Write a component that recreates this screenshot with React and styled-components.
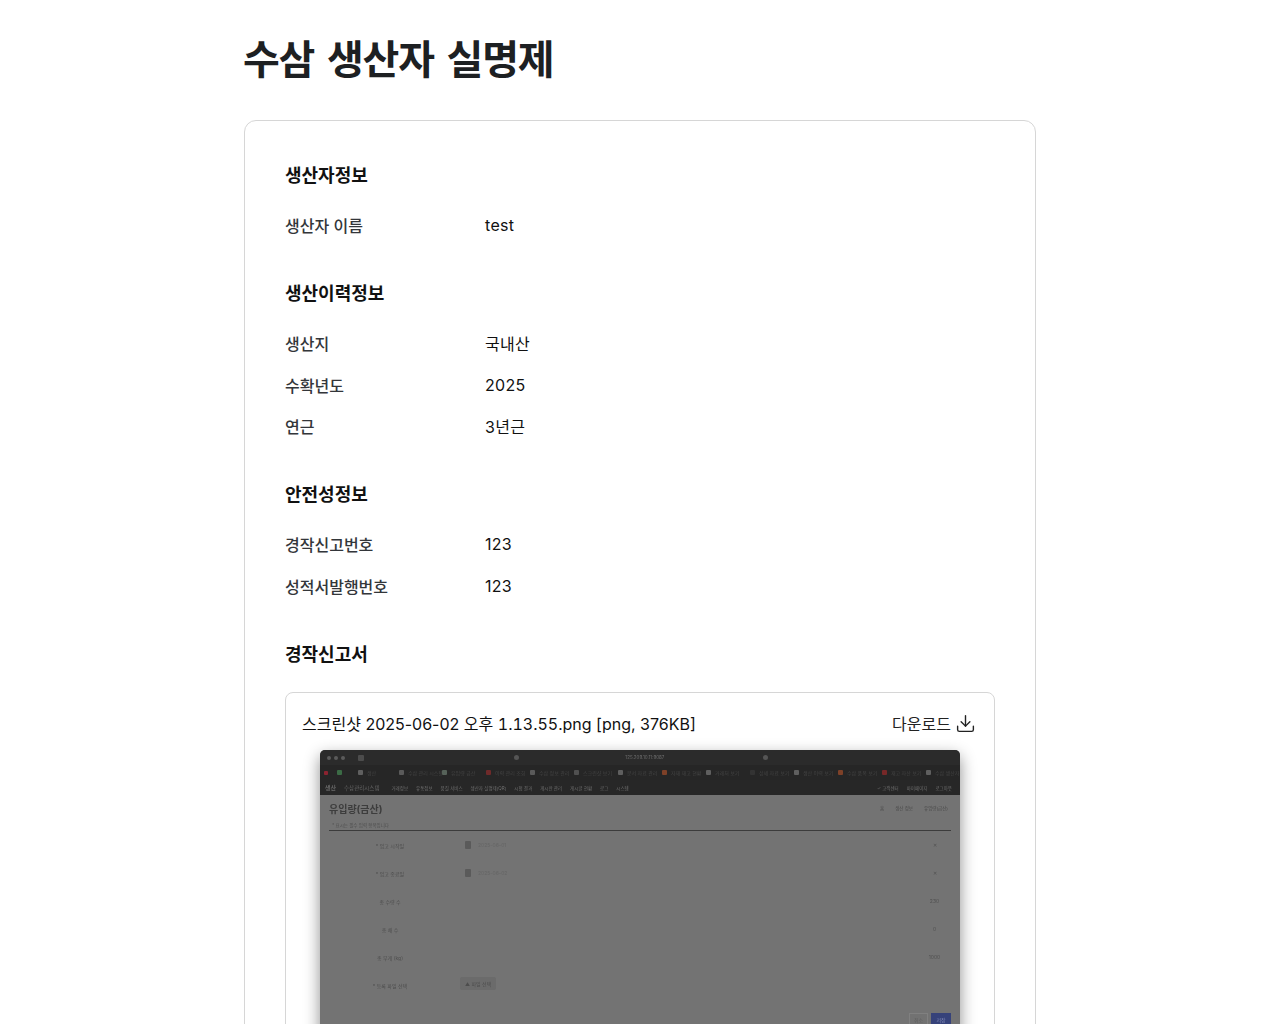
import React from 'react';
import styled, { createGlobalStyle } from 'styled-components';
import { Download } from 'lucide-react';

const GlobalStyle = createGlobalStyle`
  body {
    margin: 0;
    background: #fff;
    color: #111;
    font-family: Inter, "Noto Sans CJK KR", sans-serif;
  }
`;

const Page = styled.main`
  width: 792px;
  margin: 0 auto;
  padding: 32px 0 60px;
`;

const Title = styled.h1`
  margin: 0 0 32px -1px;
  font-size: 40px;
  line-height: 56px;
  font-weight: 700;
  letter-spacing: -1.2px;
  word-spacing: 4.5px;
  color: #1d2022;
`;

const Card = styled.section`
  border: 1px solid #d6d6d6;
  border-radius: 12px;
  padding: 41px 40px 40px;
`;

const Section = styled.div`
  margin-bottom: 34px;
  &:last-child { margin-bottom: 0; }
`;

const SectionTitle = styled.h2`
  margin: 0 0 15.5px;
  font-size: 18px;
  line-height: 27px;
  font-weight: 700;
  color: #111;
`;

const Row = styled.div`
  display: grid;
  grid-template-columns: 200px 1fr;
  align-items: center;
  height: 41.5px;
  font-size: 16px;
`;

const Label = styled.span`
  color: #33363a;
  font-weight: 500;
`;

const Value = styled.span`
  color: #111;
  letter-spacing: 0.3px;
`;

const FileBox = styled.div`
  border: 1px solid #d6d6d6;
  border-radius: 8px;
  margin-top: 24.5px;
  padding: 15px 16px 24px;
  overflow: hidden;
`;

const FileHeader = styled.div`
  display: flex;
  justify-content: space-between;
  align-items: center;
  height: 30px;
  font-size: 16px;
  padding-right: 2px;
  margin-bottom: 12px;
`;

const FileStamp = styled.span`
  font-feature-settings: "tnum";
`;

const DownloadLink = styled.a`
  display: flex;
  align-items: center;
  gap: 4px;
  color: #222;
`;

const ShotFrame = styled.div`
  display: flex;
  justify-content: center;
`;

const ShotWindow = styled.div`
  width: 640px;
  height: 300px;
  background: #737373;
  border-radius: 5px 5px 0 0;
  box-shadow: 0 6px 16px rgba(0, 0, 0, 0.45);
  display: flex;
  flex-direction: column;
  overflow: hidden;
  font-size: 5px;
  color: #595959;
`;

const ShotBar = styled.div`
  display: flex;
  align-items: center;
  height: ${(p) => p.$h}px;
  flex-shrink: 0;
  background: ${(p) => p.$bg};
  padding: 0 8px 0 ${(p) => p.$left || 7}px;
  gap: ${(p) => p.$gap || 0}px;
  color: #666;
  filter: blur(0.4px);
`;

const Dot = styled.i`
  width: ${(p) => p.$s || 4}px;
  height: ${(p) => p.$s || 4}px;
  flex-shrink: 0;
  margin-left: ${(p) => p.$ml || 0}px;
  margin-right: ${(p) => p.$mr || 0}px;
  border-radius: ${(p) => (p.$square ? '1px' : '50%')};
  background: ${(p) => p.$c};
`;

const Tab = styled.span`
  display: flex;
  align-items: center;
  gap: 4px;
  width: ${(p) => p.$w || 44}px;
  flex-shrink: 0;
  white-space: nowrap;
  overflow: hidden;
  color: #444;
`;

const Spacer = styled.span`
  flex: ${(p) => p.$f || 1};
`;

const BrandLogo = styled.span`
  font-size: 6px;
  font-weight: 700;
  color: #666;
  white-space: nowrap;
`;

const BrandText = styled.span`
  font-size: 5.5px;
  color: #626262;
  margin-right: 4px;
  white-space: nowrap;
`;

const NavItem = styled.span`
  white-space: nowrap;
  color: #6e6e6e;
  font-size: 4.5px;
`;

const ShotBody = styled.div`
  flex: 1;
  display: flex;
  flex-direction: column;
  padding: 0 9px 0 9px;
  filter: blur(0.45px);
`;

const ShotHead = styled.div`
  display: flex;
  align-items: center;
  justify-content: space-between;
  height: 26px;
  padding-right: 3px;
`;

const ShotTitle = styled.span`
  font-size: 10px;
  font-weight: 700;
  color: #3d3d3d;
`;

const ShotCrumbs = styled.div`
  display: flex;
  gap: 11px;
  align-items: center;
  color: #4a4a4a;
  font-size: 4.5px;
`;

const ShotSub = styled.div`
  height: 9px;
  font-size: 4.5px;
  line-height: 9px;
  padding-left: 3px;
  color: #4f4f4f;
  border-bottom: 1px solid #3c3c3c;
  box-sizing: content-box;
`;

const FormRow = styled.div`
  display: grid;
  grid-template-columns: 122px 20px 1fr 33px;
  align-items: center;
  height: 28px;
  color: #4d4d4d;
  &:first-of-type { margin-top: 1px; }
`;

const FormLabel = styled.span`
  text-align: center;
`;

const FormValue = styled.span`
  padding-left: 7px;
  color: #656565;
`;

const FormEnd = styled.span`
  text-align: center;
  color: #505050;
`;

const DocIcon = styled.i`
  width: 6px;
  height: 8px;
  justify-self: end;
  background: #5a5a5a;
  border-radius: 1px;
`;

const UploadChip = styled.span`
  display: inline-flex;
  align-items: center;
  gap: 3px;
  justify-self: start;
  margin-left: -11px;
  margin-top: -4px;
  padding: 3px 5px;
  border-radius: 2px;
  background: #6b6b6b;
  white-space: nowrap;
`;

const ShotActions = styled.div`
  display: flex;
  justify-content: flex-end;
  gap: 3px;
  margin-top: 14px;
`;

const ShotButton = styled.span`
  width: ${(p) => p.$w}px;
  height: 11px;
  display: flex;
  align-items: center;
  justify-content: center;
  color: ${(p) => (p.$primary ? '#7f88b4' : '#5e5e5e')};
  background: ${(p) => (p.$primary ? '#36427a' : '#727272')};
  border: 1px solid ${(p) => (p.$primary ? '#36427a' : '#808080')};
`;

const tabs = [
  ['#5f5f5f', '생산', 41], ['#5a5a5a', '수삼 관리 시스템', 43], ['#566259', '유입량 금산'], ['#6f2a2a', '이력 관리 조회'],
  ['#5a5a5a', '수삼 정보 관리'], ['#505050', '스크린샷 보기'], ['#5f5f5f', '문서 자료 관리'], ['#7e4128', '자재 재고 현황'],
  ['#5f5f5f', '거래처 보기'], ['#333', '상세 자료 보기'], ['#5f5f5f', '생산 이력 보기'], ['#7e4128', '수삼 품목 보기'],
  ['#772828', '재고 자산 보기'], ['#5f5f5f', '수삼 생산자'],
];

const menus = ['거래정보', '유통정보', '품질 서비스', '생산자 실명제(QR)', '시험 결과', '게시판 관리', '게시글 현황', '로그', '시스템'];

const formRows = [
  { label: '* 입고 시작일', date: '2025-06-01', end: '✕' },
  { label: '* 입고 종료일', date: '2025-06-02', end: '✕' },
  { label: '총 수량 수', end: '230' },
  { label: '총 채 수', end: '0' },
  { label: '총 무게 (kg)', end: '1000' },
];

function ShotImage() {
  return (
    <ShotWindow aria-hidden="true">
      <ShotBar $h={15} $bg="#2b2b2b" $gap={3}>
        <Dot $c="#5b5b5b" /><Dot $c="#5b5b5b" /><Dot $c="#5b5b5b" />
        <Dot $c="#4c4c4c" $s={6} $square $ml={10} />
        <Spacer $f={153} />
        <Dot $c="#555" $s={5} />
        <Spacer $f={106} />
        <NavItem>125.209.10.11:9087</NavItem>
        <Spacer $f={98} />
        <Dot $c="#555" $s={5} />
        <Spacer $f={192} />
      </ShotBar>
      <ShotBar $h={15} $bg="#262626" $left={4}>
        <Dot $c="#8b2330" $s={4} $square $mr={9} />
        <Dot $c="#3b6b45" $s={5} $square $mr={16} />
        {tabs.map(([color, text, w]) => (
          <Tab key={text} $w={w}><Dot $c={color} $s={5} $square />{text}</Tab>
        ))}
      </ShotBar>
      <ShotBar $h={15} $bg="#272727" $gap={8} $left={5}>
        <BrandLogo>생산</BrandLogo>
        <BrandText>수삼관리시스템</BrandText>
        {menus.map((m) => <NavItem key={m}>{m}</NavItem>)}
        <Spacer />
        <NavItem>✓ 고객센터</NavItem>
        <NavItem>마이페이지</NavItem>
        <NavItem>로그아웃</NavItem>
      </ShotBar>
      <ShotBody>
        <ShotHead>
          <ShotTitle>유입량(금산)</ShotTitle>
          <ShotCrumbs><span>홈</span><span>생산 정보</span><span>유입량(금산)</span></ShotCrumbs>
        </ShotHead>
        <ShotSub>* 표시는 필수 입력 항목입니다</ShotSub>
        {formRows.map((r) => (
          <FormRow key={r.label}>
            <FormLabel>{r.label}</FormLabel>
            {r.date ? <DocIcon /> : <span />}
            <FormValue>{r.date}</FormValue>
            <FormEnd>{r.end}</FormEnd>
          </FormRow>
        ))}
        <FormRow>
          <FormLabel>* 등록 파일 선택</FormLabel>
          <span />
          <UploadChip>▲ 파일 선택</UploadChip>
          <span />
        </FormRow>
        <ShotActions>
          <ShotButton $w={17}>취소</ShotButton>
          <ShotButton $w={18} $primary>저장</ShotButton>
        </ShotActions>
      </ShotBody>
    </ShotWindow>
  );
}

function InfoRow({ label, value }) {
  return (
    <Row>
      <Label>{label}</Label>
      <Value>{value}</Value>
    </Row>
  );
}

export default function App() {
  return (
    <Page>
      <GlobalStyle />
      <Title>수삼 생산자 실명제</Title>
      <Card>
        <Section>
          <SectionTitle>생산자정보</SectionTitle>
          <InfoRow label="생산자 이름" value="test" />
        </Section>
        <Section>
          <SectionTitle>생산이력정보</SectionTitle>
          <InfoRow label="생산지" value="국내산" />
          <InfoRow label="수확년도" value="2025" />
          <InfoRow label="연근" value="3년근" />
        </Section>
        <Section>
          <SectionTitle>안전성정보</SectionTitle>
          <InfoRow label="경작신고번호" value="123" />
          <InfoRow label="성적서발행번호" value="123" />
        </Section>
        <Section>
          <SectionTitle>경작신고서</SectionTitle>
          <FileBox>
            <FileHeader>
              <span>스크린샷 2025-06-02 오후 <FileStamp>1.13.55.png</FileStamp> [png, 376KB]</span>
              <DownloadLink>다운로드 <Download size={21} strokeWidth={1.6} /></DownloadLink>
            </FileHeader>
            <ShotFrame><ShotImage /></ShotFrame>
          </FileBox>
        </Section>
      </Card>
    </Page>
  );
}
